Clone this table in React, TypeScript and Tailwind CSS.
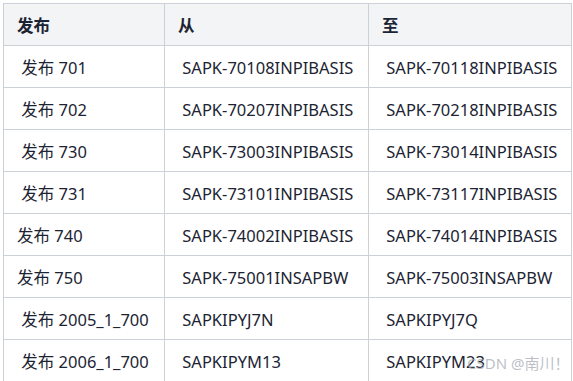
import React from "react";

const ROWS: [string, string, string][] = [
  [" 发布 701", " SAPK-70108INPIBASIS", " SAPK-70118INPIBASIS"],
  [" 发布 702", " SAPK-70207INPIBASIS", " SAPK-70218INPIBASIS"],
  [" 发布 730", " SAPK-73003INPIBASIS", " SAPK-73014INPIBASIS"],
  [" 发布 731", " SAPK-73101INPIBASIS", " SAPK-73117INPIBASIS"],
  ["发布 740", " SAPK-74002INPIBASIS", " SAPK-74014INPIBASIS"],
  ["发布 750", " SAPK-75001INSAPBW", " SAPK-75003INSAPBW"],
  [" 发布 2005_1_700", " SAPKIPYJ7N", " SAPKIPYJ7Q"],
  [" 发布 2006_1_700", " SAPKIPYM13", " SAPKIPYM23"],
];

export default function App() {
  return (
    <div
      className="relative h-[381px] w-[573px] overflow-hidden bg-white pl-[3px] pt-[3px] text-[16.5px] text-[#1c2433]"
      style={{ fontFamily: '"Noto Sans", "Noto Sans CJK SC", sans-serif' }}
    >
      <table className="w-[568px] table-fixed border-collapse">
        <colgroup>
          <col className="w-[161px]" />
          <col className="w-[204px]" />
          <col className="w-[203px]" />
        </colgroup>
        <thead>
          <tr className="h-[42px] bg-[#f3f4f6]">
            {["发布", "从", "至"].map((h) => (
              <th
                key={h}
                className="border border-[#ccd0d7] px-[13px] pt-[3px] text-left font-bold leading-tight"
              >
                {h}
              </th>
            ))}
          </tr>
        </thead>
        <tbody>
          {ROWS.map((row, i) => (
            <tr key={i} className="h-[42px]">
              {row.map((cell, j) => (
                <td
                  key={j}
                  className="whitespace-pre border border-[#ccd0d7] px-[13px] pt-[3px] leading-tight"
                >
                  {cell}
                </td>
              ))}
            </tr>
          ))}
        </tbody>
      </table>
      <div className="absolute left-[467px] top-[352px] text-[15px] text-[#a6abb2]/75">
        CSDN @南川！
      </div>
    </div>
  );
}
